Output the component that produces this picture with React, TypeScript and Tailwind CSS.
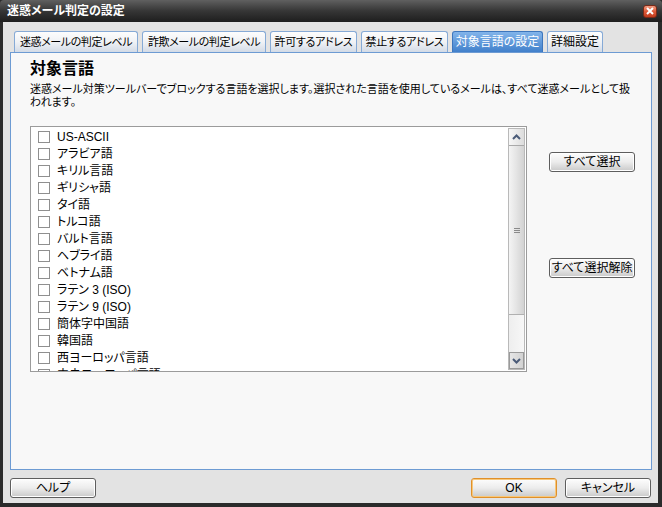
import React from 'react';

const tabs = [
  { name: '迷惑メールの判定レベル', w: 'w-[124px]', t: 'text-[11px] tracking-[-0.4px]' },
  { name: '詐欺メールの判定レベル', w: 'w-[124px]', t: 'text-[11px] tracking-[-0.4px]' },
  { name: '許可するアドレス', w: 'w-[87px]', t: 'text-[11px] tracking-[-0.3px]' },
  { name: '禁止するアドレス', w: 'w-[87px]', t: 'text-[11px] tracking-[-0.3px]' },
  { name: '対象言語の設定', w: 'w-[91px]', t: 'text-[12px]', active: true },
  { name: '詳細設定', w: 'w-[56px]', t: 'text-[12px]' },
];

const languages = [
  'US-ASCII',
  'アラビア語',
  'キリル言語',
  'ギリシャ語',
  'タイ語',
  'トルコ語',
  'バルト言語',
  'ヘブライ語',
  'ベトナム語',
  'ラテン 3 (ISO)',
  'ラテン 9 (ISO)',
  '簡体字中国語',
  '韓国語',
  '西ヨーロッパ言語',
  '中央ヨーロッパ言語',
];

const Button = ({ label, primary }: { label: string; primary?: boolean }) => (
  <button
    className={`h-[20px] w-[86px] rounded-[3px] border text-[12px] leading-none text-black bg-gradient-to-b from-[#fdfdfd] via-[#ececec] to-[#c9c9c9] ${
      primary ? 'border-[#e0902a] shadow-[inset_0_0_0_1px_#f7c77a]' : 'border-[#5e5e5e] shadow-[inset_0_0_0_1px_#ffffff]'
    }`}
  >
    {label}
  </button>
);

const Chevron = ({ up }: { up?: boolean }) => (
  <svg width="9" height="6" viewBox="0 0 9 6">
    <polyline
      points={up ? '1,5 4.5,1.5 8,5' : '1,1 4.5,4.5 8,1'}
      fill="none"
      stroke="#4a5b78"
      strokeWidth="2"
    />
  </svg>
);

export default function App() {
  return (
    <div className="w-[662px] h-[507px] flex flex-col bg-[#2b2b2b] font-['Liberation_Sans','Noto_Sans_CJK_JP',sans-serif] [font-feature-settings:'palt'] select-none">
      {/* Title bar */}
      <div className="h-[22px] flex items-center justify-between pl-[7px] pr-[5px] rounded-t-[4px] bg-gradient-to-b from-[#606060] via-[#363636] to-[#1e1e1e]">
        <span className="text-white text-[12px] font-bold leading-none">迷惑メール判定の設定</span>
        <div className="w-[14px] h-[13px] rounded-[3px] border border-[#7a2a18] bg-gradient-to-b from-[#f09a80] via-[#de5a38] to-[#c23a1c] flex items-center justify-center">
          <svg width="8" height="8" viewBox="0 0 8 8">
            <path d="M1 1 L7 7 M7 1 L1 7" stroke="#ffffff" strokeWidth="2" />
          </svg>
        </div>
      </div>

      {/* Body */}
      <div className="flex-1 ml-[3px] mr-[4px] mb-[4px] bg-[#e3e3e3] flex flex-col">
        {/* Tabs */}
        <div className="pt-[9px] pl-[11px] flex gap-[4px]">
          {tabs.map((t) => (
            <div
              key={t.name}
              className={`${t.w} ${t.t} h-[21px] flex items-center justify-center rounded-t-[3px] border border-b-0 leading-none whitespace-nowrap ${
                t.active
                  ? 'border-[#3d76bd] bg-gradient-to-b from-[#82b4ea] to-[#4180cb] text-white'
                  : 'border-[#86aad6] bg-gradient-to-b from-[#fdfdfd] via-[#f0f2f5] to-[#d3dbe6] text-black'
              }`}
            >
              {t.name}
            </div>
          ))}
        </div>

        {/* Panel */}
        <div className="h-[418px] ml-[7px] mr-[6px] border border-[#6d9bd3] bg-[#f8f8f8] pl-[19px] pr-[16px]">
          <div className="mt-[6px] text-[16px] leading-[20px] font-bold text-black">対象言語</div>
          <div className="mt-[4px] text-[11px] leading-[13px] text-black whitespace-nowrap">
            迷惑メール対策ツールバーでブロックする言語を選択します。選択された言語を使用しているメールは、すべて迷惑メールとして扱
            <br />
            われます。
          </div>

          <div className="mt-[17px] flex">
            {/* List */}
            <div className="w-[497px] h-[246px] border border-[#9b9b9b] bg-white flex">
              <div className="flex-1 overflow-hidden pt-[1px]">
                {languages.map((l) => (
                  <div key={l} className="h-[17px] flex items-center pl-[7px] gap-[7px]">
                    <div className="w-[12px] h-[12px] border border-[#8f8f8f] bg-white" />
                    <span className="text-[12px] leading-none text-black">{l}</span>
                  </div>
                ))}
              </div>
              {/* Scrollbar */}
              <div className="w-[17px] my-[1px] mr-[1px] border border-[#b9b9b9] bg-gradient-to-r from-[#eeeeee] to-[#f7f7f7] flex flex-col">
                <div className="h-[17px] border-b border-[#a9a9a9] bg-gradient-to-r from-[#f7f7f7] to-[#dcdcdc] flex items-center justify-center">
                  <Chevron up />
                </div>
                <div className="h-[169px] border-b border-[#b0b0b0] bg-gradient-to-r from-[#f4f4f4] via-[#e4e4e4] to-[#d2d2d2] flex flex-col items-center justify-center gap-[1px]">
                  <div className="w-[6px] h-[1px] bg-[#8a8a8a]" />
                  <div className="w-[6px] h-[1px] bg-[#8a8a8a]" />
                  <div className="w-[6px] h-[1px] bg-[#8a8a8a]" />
                </div>
                <div className="flex-1" />
                <div className="h-[17px] border border-[#9a9a9a] bg-gradient-to-r from-[#e6e6e6] to-[#d2d2d2] flex items-center justify-center">
                  <Chevron />
                </div>
              </div>
            </div>

            {/* Side buttons */}
            <div className="ml-[22px] flex flex-col">
              <div className="mt-[23px]">
                <Button label="すべて選択" />
              </div>
              <div className="mt-[82px]">
                <Button label="すべて選択解除" />
              </div>
            </div>
          </div>
        </div>

        {/* Footer */}
        <div className="mt-[8px] flex items-start justify-between ml-[7px] mr-[7px]">
          <Button label="ヘルプ" />
          <div className="flex gap-[8px]">
            <Button label="OK" primary />
            <Button label="キャンセル" />
          </div>
        </div>
      </div>
    </div>
  );
}
